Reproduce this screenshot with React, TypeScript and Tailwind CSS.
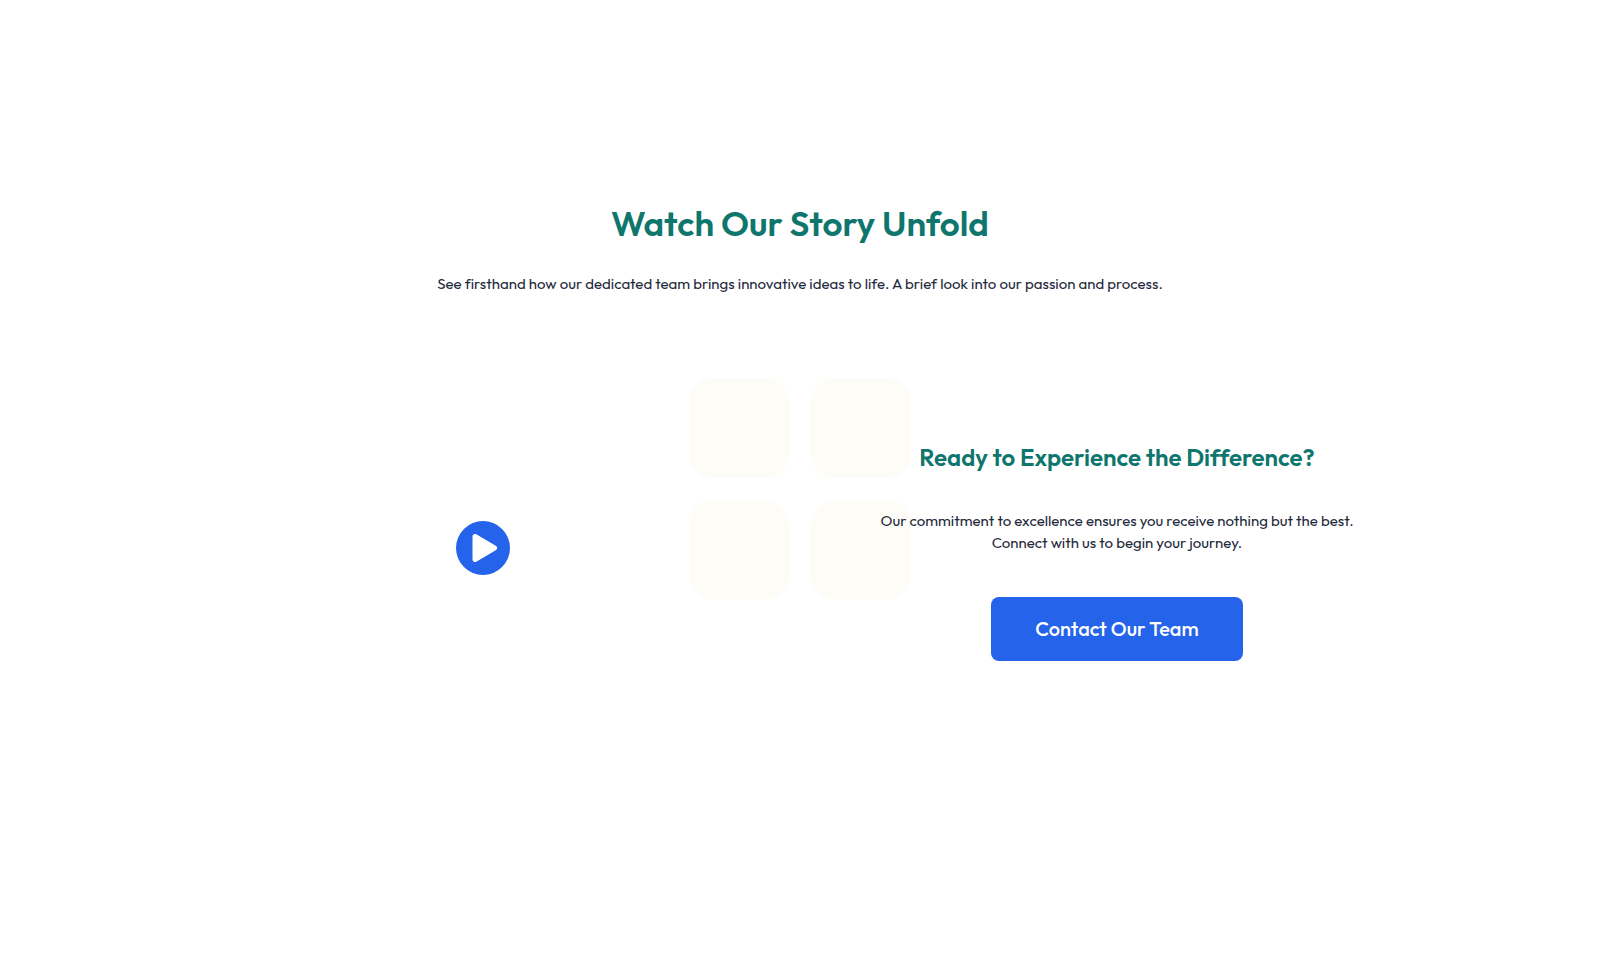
function Backdrop() {
  return (
    <div aria-hidden="true" className="absolute inset-0 flex items-center justify-center">
      <div className="grid grid-cols-2 gap-[22px]">
        <div className="size-[100px] rounded-3xl bg-[#fefcf7]" />
        <div className="size-[100px] rounded-3xl bg-[#fefcf7]" />
        <div className="size-[100px] rounded-3xl bg-[#fefcf7]" />
        <div className="size-[100px] rounded-3xl bg-[#fefcf7]" />
      </div>
    </div>
  );
}

function PlayButton() {
  return (
    <button type="button" aria-label="Play video" className="cursor-pointer rounded-full">
      <svg viewBox="0 0 54 54" className="size-[54px]" aria-hidden="true">
        <circle cx="27" cy="27" r="27" fill="#2563eb" />
        <path
          d="M19 15.5 L38.5 27 L19 38.5 Z"
          fill="#fff"
          stroke="#fff"
          strokeWidth="5"
          strokeLinejoin="round"
        />
      </svg>
    </button>
  );
}

export default function App() {
  return (
    <main className="relative flex min-h-screen flex-col items-center bg-white px-6 pt-[200px] pb-24 font-['Outfit',sans-serif] text-[15px] text-[#1e293b] antialiased [font-variant-ligatures:none]">
      <Backdrop />
      <header className="relative text-center">
        <h2 className="text-[35px] leading-[46px] font-semibold text-[#0f766e]">Watch Our Story Unfold</h2>
        <p className="mt-6 leading-7">
          See firsthand how our dedicated team brings innovative ideas to life. A brief look into our passion and
          process.
        </p>
      </header>
      <section className="relative mt-[136px] grid w-full max-w-[1220px] items-center gap-12 md:grid-cols-2">
        <div className="flex justify-center">
          <PlayButton />
        </div>
        <div className="flex flex-col items-center text-center">
          <h3 className="text-2xl leading-[46px] font-semibold text-[#0f766e]">Ready to Experience the Difference?</h3>
          <p className="mt-[30px] max-w-[500px] leading-[22px]">
            Our commitment to excellence ensures you receive nothing but the best. Connect with us to begin your
            journey.
          </p>
          <a
            href="#contact"
            className="mt-[43px] rounded-lg bg-[#2563eb] px-11 py-4 text-[20px] leading-8 font-medium text-white"
          >
            Contact Our Team
          </a>
        </div>
      </section>
    </main>
  );
}
